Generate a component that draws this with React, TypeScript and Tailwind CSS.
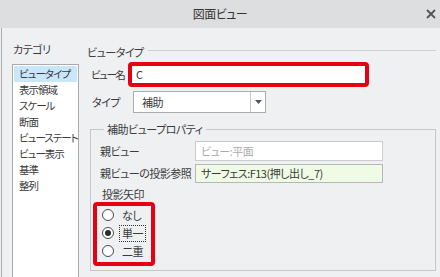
import React from 'react';

const CATEGORIES = ['ビュータイプ', '表示領域', 'スケール', '断面', 'ビューステート', 'ビュー表示', '基準', '整列'];

const Radio = ({ checked }: { checked?: boolean }) => (
  <span className="w-[12px] h-[12px] rounded-full border border-[#4a4a4a] bg-white flex items-center justify-center shrink-0">
    {checked && <span className="w-[6px] h-[6px] rounded-full bg-[#2b2b2b]" />}
  </span>
);

export default function App() {
  return (
    <div className="w-[440px] h-[277px] overflow-hidden flex flex-col bg-[#eef0f2] text-[11px] tracking-[-0.5px] text-[#3a3a3a] font-['Noto_Sans_CJK_JP','Noto_Sans',sans-serif] [font-feature-settings:'palt']">
      {/* title bar */}
      <div className="h-[28px] shrink-0 bg-[#dcdedf] grid grid-cols-[1fr_auto_1fr] items-center">
        <div />
        <span className="text-[12px] text-[#333] leading-none">図面ビュー</span>
        <div className="flex justify-end pr-[4px]">
          <svg width="10" height="10" viewBox="0 0 10 10">
            <path d="M1 1L9 9M9 1L1 9" stroke="#555" strokeWidth="1.8" />
          </svg>
        </div>
      </div>

      <div className="flex-1 min-h-0 flex ml-px border-l border-[#a9abad]">
        {/* category list */}
        <div className="w-[78px] shrink-0 flex flex-col pl-[10px]">
          <div className="mt-[13px] leading-[17px] pl-px">カテゴリ</div>
          <div className="mt-[6px] flex-1 w-[67px] bg-white border border-b-0 border-[#a9abad] pt-px px-px">
            {CATEGORIES.map((c, i) => (
              <div
                key={c}
                className={`leading-[16px] pl-[5px] whitespace-nowrap text-[10.5px] tracking-[-1px] ${i === 0 ? 'bg-[#c9e6fa]' : ''}`}
              >
                {c}
              </div>
            ))}
          </div>
        </div>

        {/* right side */}
        <div className="flex-1 flex flex-col pl-[7px] pr-[4px] pb-[6px]">
          <div className="mt-[16px] h-[17px] flex items-center">
            <span className="leading-[17px]">ビュータイプ</span>
            <div className="ml-[4px] mt-[-4px] flex-1 h-px bg-[#cfd2d5]" />
          </div>

          <div className="mt-px flex items-center">
            <span className="w-[37px] ml-[4px] leading-[17px] whitespace-nowrap text-[10.5px] tracking-[-1.5px]">ビュー名</span>
            <div className="w-[241px] h-[25px] border-[4px] border-[#e60012] rounded-[4px] bg-white flex items-center pl-[4px] leading-none">
              C
            </div>
          </div>

          <div className="mt-[4px] flex items-center">
            <span className="w-[41px] ml-[5px] leading-[17px]">タイプ</span>
            <div className="w-[133px] h-[22px] border border-[#abadb3] bg-white flex">
              <span className="flex-1 pl-[8px] flex items-center">補助</span>
              <span className="w-[15px] border-l border-[#c5c7ca] flex items-center justify-center">
                <svg width="7" height="4" viewBox="0 0 7 4">
                  <path d="M0 0H7L3.5 4Z" fill="#555" />
                </svg>
              </span>
            </div>
          </div>

          <fieldset className="mt-[8px] ml-[3px] flex-1 border border-[#c6c8cb] pl-[9px] pr-0">
            <legend className="ml-[4px] px-[3px] leading-[17px]">補助ビュープロパティ</legend>

            <div className="mt-[3px] flex items-center">
              <span className="w-[95px] leading-[17px]">親ビュー</span>
              <div className="w-[188px] h-[20px] border border-[#c9cbcd] bg-white pl-[5px] flex items-center text-[#aaa]">
                ビュー:平面
              </div>
            </div>

            <div className="mt-[3px] flex items-center">
              <span className="w-[95px] leading-[17px] whitespace-nowrap">親ビューの投影参照</span>
              <div className="w-[188px] h-[19px] border border-[#b5b8bb] bg-[#f0fbe5] pl-[5px] flex items-center">
                サーフェス:F13(押し出し_7)
              </div>
            </div>

            <div className="mt-[3px] leading-[17px] pl-[2px]">投影矢印</div>

            <div className="-ml-[7px] -mt-px w-[62px] h-[64px] border-[4px] border-[#e60012] rounded-[4px] flex flex-col pl-[5px]">
              <div className="h-[18px] flex items-center gap-[8px]">
                <Radio />
                <span className="leading-[17px]">なし</span>
              </div>
              <div className="h-[18px] flex items-center gap-[8px]">
                <Radio checked />
                <span className="leading-[15px] -ml-[3px] px-[2px] border border-dotted border-[#333]">単一</span>
              </div>
              <div className="h-[18px] flex items-center gap-[8px]">
                <Radio />
                <span className="leading-[17px]">二重</span>
              </div>
            </div>
          </fieldset>
        </div>
      </div>
    </div>
  );
}
